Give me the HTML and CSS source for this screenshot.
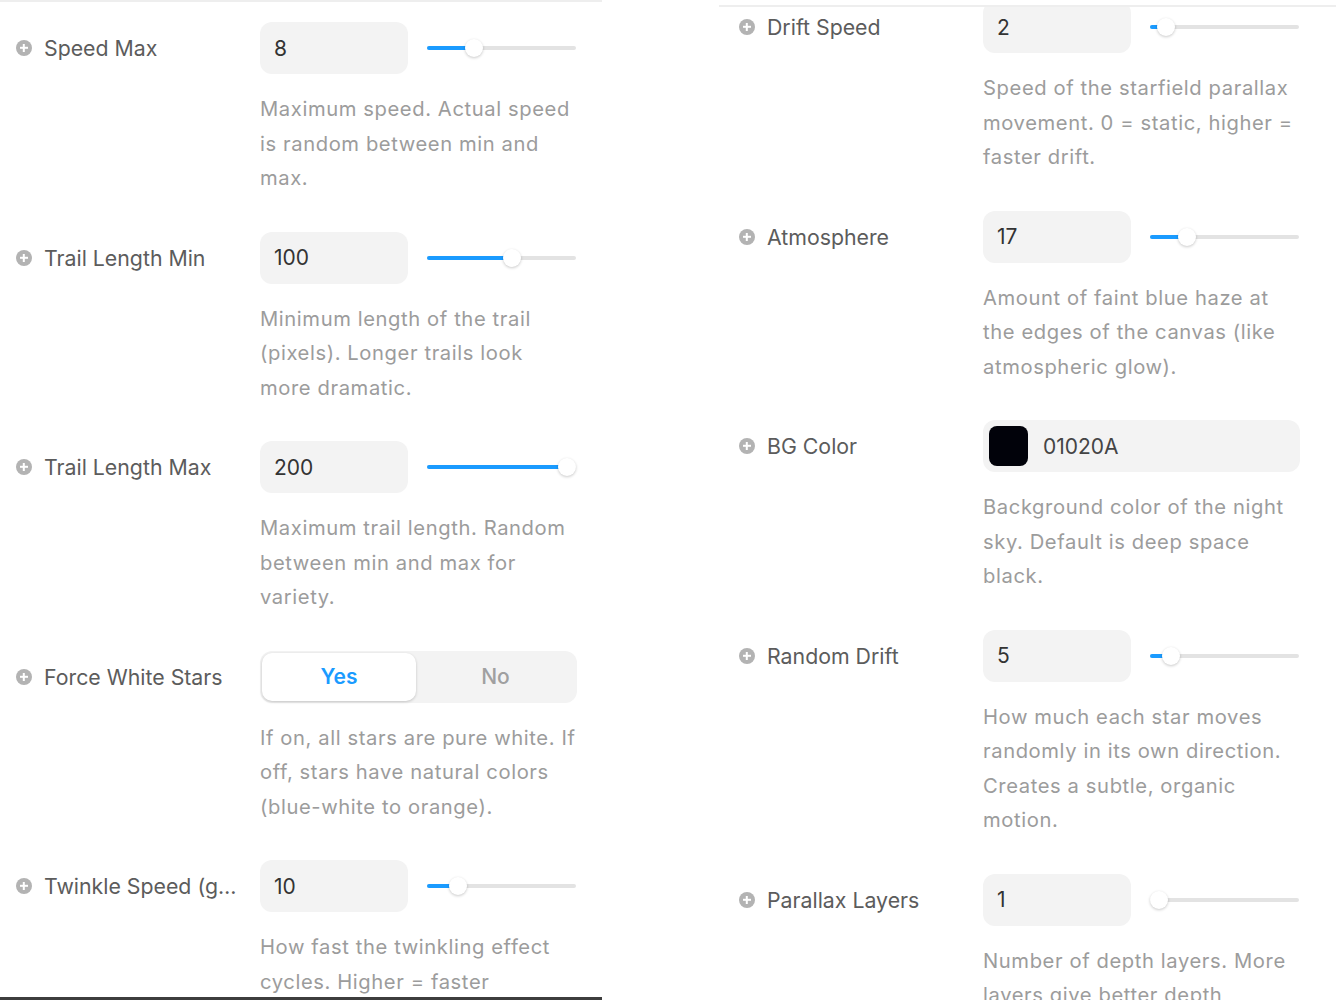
FILE: index.html
```html
<!DOCTYPE html>
<html>
<head>
<meta charset="utf-8">
<link rel="stylesheet" href="styles.css">
</head>
<body>
<div class="page">
  <section class="panel panel-left">
    <div class="list">
      <div class="row">
        <div class="label"><span class="plus"></span><span class="label-text">Speed Max</span></div>
        <div class="field">
          <div class="controls">
            <div class="num">8</div>
            <div class="slider"><div class="fill" style="width:47px"></div><div class="thumb" style="left:47px"></div></div>
          </div>
          <p class="desc">Maximum speed. Actual speed is random between min and max.</p>
        </div>
      </div>
      <div class="row">
        <div class="label"><span class="plus"></span><span class="label-text">Trail Length Min</span></div>
        <div class="field">
          <div class="controls">
            <div class="num">100</div>
            <div class="slider"><div class="fill" style="width:85px"></div><div class="thumb" style="left:85px"></div></div>
          </div>
          <p class="desc">Minimum length of the trail (pixels). Longer trails look more dramatic.</p>
        </div>
      </div>
      <div class="row">
        <div class="label"><span class="plus"></span><span class="label-text">Trail Length Max</span></div>
        <div class="field">
          <div class="controls">
            <div class="num">200</div>
            <div class="slider"><div class="fill" style="width:140px"></div><div class="thumb" style="left:140px"></div></div>
          </div>
          <p class="desc">Maximum trail length. Random between min and max for variety.</p>
        </div>
      </div>
      <div class="row">
        <div class="label"><span class="plus"></span><span class="label-text">Force White Stars</span></div>
        <div class="field">
          <div class="toggle">
            <div class="opt opt-on">Yes</div>
            <div class="opt opt-off">No</div>
          </div>
          <p class="desc">If on, all stars are pure white. If off, stars have natural colors (blue-white to orange).</p>
        </div>
      </div>
      <div class="row">
        <div class="label"><span class="plus"></span><span class="label-text">Twinkle Speed (glow pulse)</span></div>
        <div class="field">
          <div class="controls">
            <div class="num">10</div>
            <div class="slider"><div class="fill" style="width:31px"></div><div class="thumb" style="left:31px"></div></div>
          </div>
          <p class="desc">How fast the twinkling effect cycles. Higher = faster twinkling.</p>
        </div>
      </div>
    </div>
  </section>
  <section class="panel panel-right">
    <div class="list list-right">
      <div class="row">
        <div class="label"><span class="plus"></span><span class="label-text">Drift Speed</span></div>
        <div class="field">
          <div class="controls">
            <div class="num">2</div>
            <div class="slider"><div class="fill" style="width:16px"></div><div class="thumb" style="left:16px"></div></div>
          </div>
          <p class="desc">Speed of the starfield parallax movement. 0 = static, higher = faster drift.</p>
        </div>
      </div>
      <div class="row">
        <div class="label"><span class="plus"></span><span class="label-text">Atmosphere</span></div>
        <div class="field">
          <div class="controls">
            <div class="num">17</div>
            <div class="slider"><div class="fill" style="width:37px"></div><div class="thumb" style="left:37px"></div></div>
          </div>
          <p class="desc">Amount of faint blue haze at the edges of the canvas (like atmospheric glow).</p>
        </div>
      </div>
      <div class="row">
        <div class="label"><span class="plus"></span><span class="label-text">BG Color</span></div>
        <div class="field">
          <div class="color">
            <span class="swatch"></span>
            <span class="hex">01020A</span>
          </div>
          <p class="desc">Background color of the night sky. Default is deep space black.</p>
        </div>
      </div>
      <div class="row">
        <div class="label"><span class="plus"></span><span class="label-text">Random Drift</span></div>
        <div class="field">
          <div class="controls">
            <div class="num">5</div>
            <div class="slider"><div class="fill" style="width:21px"></div><div class="thumb" style="left:21px"></div></div>
          </div>
          <p class="desc">How much each star moves randomly in its own direction. Creates a subtle, organic motion.</p>
        </div>
      </div>
      <div class="row">
        <div class="label"><span class="plus"></span><span class="label-text">Parallax Layers</span></div>
        <div class="field">
          <div class="controls">
            <div class="num">1</div>
            <div class="slider"><div class="fill" style="width:0px"></div><div class="thumb" style="left:9px"></div></div>
          </div>
          <p class="desc">Number of depth layers. More layers give better depth perception.</p>
        </div>
      </div>
    </div>
  </section>
</div>
</body>
</html>
```
FILE: styles.css
```css
* { box-sizing: border-box; }
html, body {
  margin: 0;
  padding: 0;
  background: #ffffff;
  height: 1000px;
  overflow: hidden;
}
body {
  font-family: Inter, "Noto Sans", "Liberation Sans", sans-serif;
  -webkit-font-smoothing: antialiased;
}
.page {
  display: flex;
  gap: 117px;
  height: 1000px;
  align-items: flex-start;
}
.panel {
  overflow: hidden;
  background: #fff;
}
.panel-left {
  width: 602px;
  height: 1000px;
  border-top: 2px solid #eeeeee;
  border-bottom: 3px solid #3d3d3d;
  padding-left: 16px;
}
.panel-right {
  width: 617px;
  height: 995px;
  margin-top: 5px;
  border-top: 2px solid #eeeeee;
  padding-left: 20px;
}
.list {
  padding-top: 20px;
}
.list-right {
  margin-top: -6px;
  padding-top: 0;
}
.row {
  display: grid;
  grid-template-columns: 244px 318px;
  padding-bottom: 36px;
}
.label {
  display: flex;
  align-items: center;
  height: 52px;
  gap: 12px;
  padding-right: 20px;
  min-width: 0;
}
.plus {
  flex: none;
  width: 16px;
  height: 16px;
  border-radius: 50%;
  background: #b3b3b3;
  position: relative;
}
.plus::before, .plus::after {
  content: "";
  position: absolute;
  background: #fff;
  left: 50%;
  top: 50%;
  transform: translate(-50%, -50%);
}
.plus::before { width: 8px; height: 2.4px; }
.plus::after { width: 2.4px; height: 8px; }
.label-text {
  font-size: 21.3px;
  color: #5c5c5c;
  font-weight: 400;
  white-space: nowrap;
  overflow: hidden;
  text-overflow: ellipsis;
  min-width: 0;
}
.field {
  min-width: 0;
}
.controls {
  display: flex;
  align-items: center;
  height: 52px;
  gap: 19px;
}
.num {
  width: 148px;
  height: 52px;
  background: #f3f3f3;
  border-radius: 12px;
  padding-left: 14px;
  display: flex;
  align-items: center;
  font-size: 21px;
  color: #333333;
}
.slider {
  position: relative;
  width: 149px;
  height: 4px;
  border-radius: 2px;
  background: #e3e3e3;
}
.fill {
  position: absolute;
  left: 0;
  top: 0;
  height: 4px;
  border-radius: 2px;
  background: #1a9bff;
}
.thumb {
  position: absolute;
  top: 50%;
  width: 18px;
  height: 18px;
  margin-left: -9px;
  margin-top: -9px;
  border-radius: 50%;
  background: #ffffff;
  box-shadow: 0 1px 3px rgba(0, 0, 0, 0.22);
}
.desc {
  margin: 18px 0 0 0;
  font-size: 20.2px;
  letter-spacing: 0.6px;
  line-height: 34.5px;
  color: #9c9c9c;
  padding-right: 2px;
}
.toggle {
  display: flex;
  height: 52px;
  width: 317px;
  background: #f3f3f3;
  border-radius: 12px;
  padding: 2px;
}
.opt {
  display: flex;
  align-items: center;
  justify-content: center;
  font-size: 21px;
  border-radius: 10px;
}
.opt-on {
  flex: none;
  width: 154px;
  background: #ffffff;
  color: #1a9bff;
  font-weight: 600;
  box-shadow: 0 1px 3px rgba(0, 0, 0, 0.2);
}
.opt-off {
  flex: 1;
  color: #a0a0a0;
  font-weight: 500;
}
.color {
  display: flex;
  align-items: center;
  height: 52px;
  width: 317px;
  background: #f3f3f3;
  border-radius: 12px;
  padding-left: 6px;
  gap: 15px;
}
.swatch {
  width: 39px;
  height: 40px;
  border-radius: 8px;
  background: #01020a;
}
.hex {
  font-size: 21px;
  color: #444444;
}
```
